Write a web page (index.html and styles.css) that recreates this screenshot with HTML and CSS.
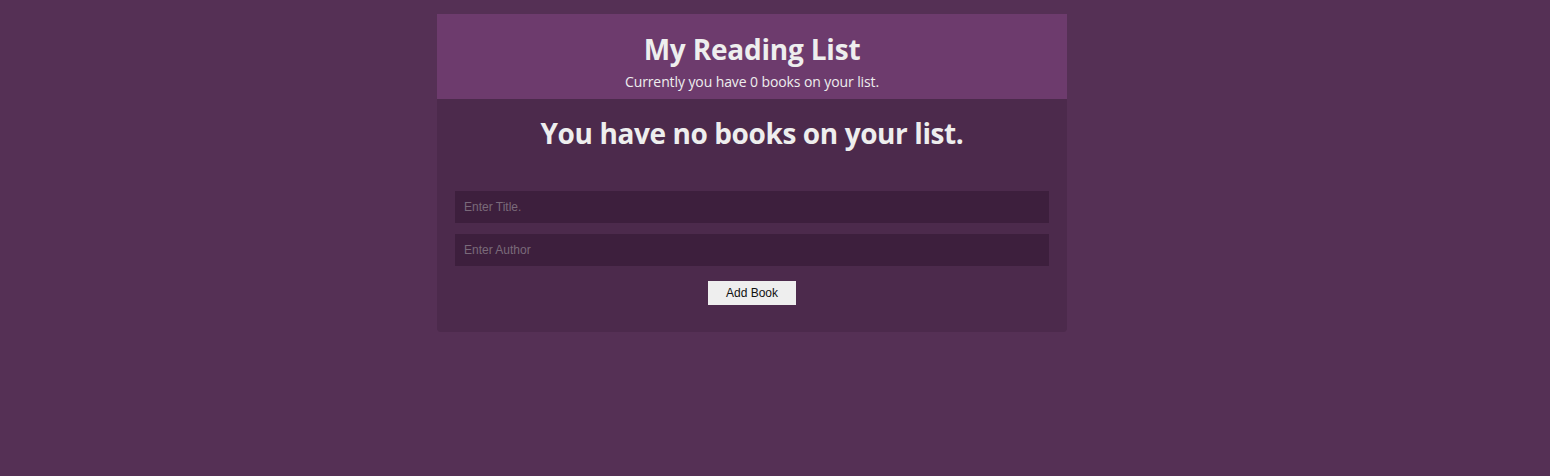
FILE: index.html
```html
<!DOCTYPE html>
<html>
<head>
<meta charset="utf-8">
<link rel="stylesheet" href="styles.css">
</head>
<body>
<div class="app">
  <header class="navbar">
    <h1 class="title">My Reading List</h1>
    <p class="count">Currently you have 0 books on your list.</p>
  </header>
  <main class="content">
    <h2 class="empty">You have no books on your list.</h2>
    <form class="book-form">
      <input class="field" type="text" placeholder="Enter Title.">
      <input class="field" type="text" placeholder="Enter Author">
      <button class="add-btn" type="button">Add Book</button>
    </form>
  </main>
</div>
</body>
</html>
```
FILE: styles.css
```css
html, body {
  margin: 0;
  padding: 0;
}
body {
  background: #553055;
  font-family: "Open Sans", "Noto Sans", sans-serif;
  color: #eee;
  height: 476px;
}
.app {
  width: 630px;
  margin: 14px 0 0 437px;
  background: #4c2a4c;
  border-radius: 0 0 4px 4px;
  overflow: hidden;
}
.navbar {
  background: #6d3b6d;
  text-align: center;
  padding: 18px 0 7px;
}
.title {
  margin: 0;
  font-size: 28px;
  font-weight: 700;
  line-height: 34px;
  letter-spacing: -0.2px;
}
.count {
  margin: 6px 0 0;
  font-size: 14px;
  line-height: 20px;
  letter-spacing: -0.1px;
}
.content {
  padding: 16px 18px 27px;
}
.empty {
  margin: 0 0 40px;
  font-size: 28px;
  font-weight: 700;
  line-height: 36px;
  text-align: center;
  letter-spacing: -0.4px;
}
.book-form {
  display: flex;
  flex-direction: column;
  align-items: center;
}
.field {
  box-sizing: border-box;
  width: 100%;
  height: 32px;
  margin: 0 0 11px;
  padding: 0 9px;
  border: none;
  outline: none;
  background: #3d1f3d;
  color: #eee;
  font-family: "Liberation Sans", Arial, sans-serif;
  font-size: 12px;
}
.field::placeholder {
  color: #7a6a7a;
}
.add-btn {
  margin-top: 4px;
  width: 88px;
  height: 24px;
  border: none;
  background: #eee;
  color: #111;
  font-family: "Liberation Sans", Arial, sans-serif;
  font-size: 12px;
  padding: 0;
}
```
